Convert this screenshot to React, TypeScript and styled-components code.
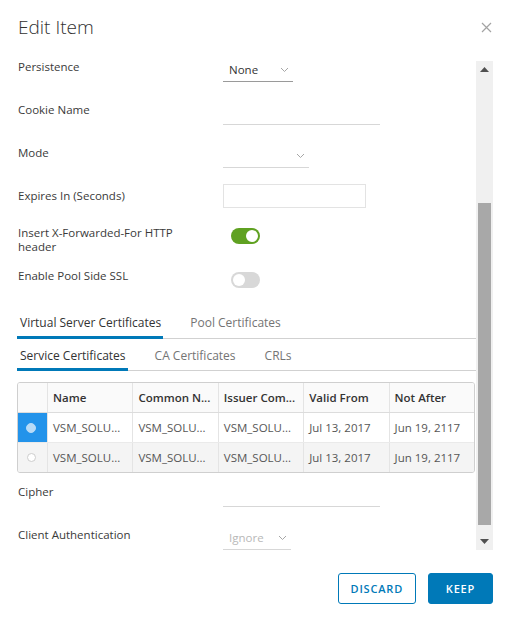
import styled, { createGlobalStyle } from "styled-components";

// Edit item modal with a form, cert tabs and a small table

const FONT = `"Open Sans", Lato, "Liberation Sans", sans-serif`;

const GlobalStyle = createGlobalStyle`
  html, body {
    margin: 0;
    padding: 0;
    background: #fff;
  }
  body {
    font-family: ${FONT};
    color: #333;
  }
`;

interface CertRow {
  name: string;
  common: string;
  issuer: string;
  validFrom: string;
  notAfter: string;
  selected: boolean;
}

const certs: CertRow[] = [
  {
    name: "VSM_SOLU...",
    common: "VSM_SOLU...",
    issuer: "VSM_SOLU...",
    validFrom: "Jul 13, 2017",
    notAfter: "Jun 19, 2117",
    selected: true,
  },
  {
    name: "VSM_SOLU...",
    common: "VSM_SOLU...",
    issuer: "VSM_SOLU...",
    validFrom: "Jul 13, 2017",
    notAfter: "Jun 19, 2117",
    selected: false,
  },
];

const Chevron = () => (
  <svg width="9" height="6" viewBox="0 0 9 6">
    <path d="M1 1 L4.5 4.5 L8 1" fill="none" stroke="#a6a6a6" strokeWidth="1" />
  </svg>
);

const App = () => {
  return (
    <>
      <GlobalStyle />
      <Modal>
        <Header>
          <Title>Edit Item</Title>
          <CloseButton aria-label="close">
            <svg width="11" height="11" viewBox="0 0 11 11">
              <path d="M1 1 L10 10 M10 1 L1 10" stroke="#a3a3a3" strokeWidth="1.2" />
            </svg>
          </CloseButton>
        </Header>

        <Body>
          <Content>
            <FormRow>
              <Label>Persistence</Label>
              <Select $width={70} $dark>
                <span>None</span>
                <Chevron />
              </Select>
            </FormRow>

            <FormRow $mt={21}>
              <Label>Cookie Name</Label>
              <LineInput $width={157} />
            </FormRow>

            <FormRow $mt={21}>
              <Label>Mode</Label>
              <Select $width={86}>
                <span />
                <Chevron />
              </Select>
            </FormRow>

            <FormRow $mt={16} $center>
              <Label>Expires In (Seconds)</Label>
              <BoxInput />
            </FormRow>

            <FormRow $mt={18}>
              <Label>
                Insert X-Forwarded-For HTTP
                <br />
                header
              </Label>
              <Toggle $on $offset={2} />
            </FormRow>

            <FormRow $mt={15}>
              <Label>Enable Pool Side SSL</Label>
              <Toggle $offset={3} />
            </FormRow>

            <TabBar $mt={17} $height={34}>
              <Tab $active>Virtual Server Certificates</Tab>
              <Tab>Pool Certificates</Tab>
            </TabBar>

            <TabBar $height={32}>
              <Tab $active>Service Certificates</Tab>
              <Tab>CA Certificates</Tab>
              <Tab>CRLs</Tab>
            </TabBar>

            <Table>
              <HeadRow>
                <Cell />
                <Cell>Name</Cell>
                <Cell>Common N...</Cell>
                <Cell>Issuer Com...</Cell>
                <Cell>Valid From</Cell>
                <Cell>Not After</Cell>
              </HeadRow>
              {certs.map((c, i) => (
                <DataRow key={i} $striped={i % 2 === 1}>
                  <RadioCell $selected={c.selected}>
                    <Radio $selected={c.selected} />
                  </RadioCell>
                  <Cell>{c.name}</Cell>
                  <Cell>{c.common}</Cell>
                  <Cell>{c.issuer}</Cell>
                  <Cell>{c.validFrom}</Cell>
                  <Cell>{c.notAfter}</Cell>
                </DataRow>
              ))}
            </Table>

            <FormRow $mt={12}>
              <Label>Cipher</Label>
              <LineInput $width={157} />
            </FormRow>

            <FormRow $mt={21}>
              <Label>Client Authentication</Label>
              <Select $width={68} $disabled>
                <span>Ignore</span>
                <Chevron />
              </Select>
            </FormRow>
          </Content>

          <Scrollbar>
            <ScrollArrow>
              <svg width="9" height="5" viewBox="0 0 9 5">
                <path d="M0 5 L4.5 0 L9 5 Z" fill="#505050" />
              </svg>
            </ScrollArrow>
            <ScrollTrack>
              <ScrollThumb />
            </ScrollTrack>
            <ScrollArrow>
              <svg width="9" height="5" viewBox="0 0 9 5">
                <path d="M0 0 L4.5 5 L9 0 Z" fill="#505050" />
              </svg>
            </ScrollArrow>
          </Scrollbar>
        </Body>

        <Footer>
          <Button>Discard</Button>
          <Button $primary>Keep</Button>
        </Footer>
      </Modal>
    </>
  );
};

// Styling
const Modal = styled.div`
  width: 511px;
  height: 625px;
  box-sizing: border-box;
  padding: 0 18px 0 17px;
  display: flex;
  flex-direction: column;
  background: #fff;
`;

const Header = styled.div`
  height: 60px;
  display: flex;
  justify-content: space-between;
  align-items: flex-start;
  flex-shrink: 0;
`;

const Title = styled.h3`
  margin: 14px 0 0 1px;
  font-size: 19px;
  line-height: 26px;
  font-weight: 300;
  color: #313131;
`;

const CloseButton = styled.button`
  margin-top: 22px;
  margin-right: 1px;
  padding: 0;
  border: none;
  background: none;
  line-height: 0;
  cursor: pointer;
`;

const Body = styled.div`
  height: 490px;
  display: flex;
  flex-shrink: 0;
`;

const Content = styled.div`
  flex: 1;
  overflow: hidden;
  display: flex;
  flex-direction: column;
`;

const FormRow = styled.div<{ $mt?: number; $center?: boolean }>`
  display: grid;
  grid-template-columns: 206px 1fr;
  align-items: ${(p) => (p.$center ? "center" : "start")};
  margin-top: ${(p) => p.$mt ?? 0}px;
  flex-shrink: 0;
`;

const Label = styled.label`
  padding-left: 1px;
  font-size: 11.5px;
  line-height: 14px;
  color: #3a3a3a;
`;

const Select = styled.div<{ $width: number; $dark?: boolean; $disabled?: boolean }>`
  width: ${(p) => p.$width}px;
  height: 22px;
  box-sizing: border-box;
  padding: 0 4px 2px 6px;
  display: flex;
  align-items: center;
  justify-content: space-between;
  border-bottom: 1px solid ${(p) => (p.$dark ? "#9a9a9a" : "#d7d7d7")};
  font-size: 11.5px;
  color: ${(p) => (p.$disabled ? "#b8b8b8" : "#333")};
`;

const LineInput = styled.div<{ $width: number }>`
  width: ${(p) => p.$width}px;
  height: 22px;
  box-sizing: border-box;
  border-bottom: 1px solid #d7d7d7;
`;

const BoxInput = styled.div`
  width: 143px;
  height: 24px;
  box-sizing: border-box;
  border: 1px solid #e3e3e3;
`;

const Toggle = styled.div<{ $on?: boolean; $offset: number }>`
  position: relative;
  width: 29px;
  height: 16px;
  margin: ${(p) => p.$offset}px 0 0 8px;
  border-radius: 8px;
  background: ${(p) => (p.$on ? "#5fa121" : "#d8d8d8")};

  &::after {
    content: "";
    position: absolute;
    top: 2px;
    left: ${(p) => (p.$on ? "15px" : "2px")};
    width: 12px;
    height: 12px;
    border-radius: 50%;
    background: #fff;
  }
`;

const TabBar = styled.div<{ $mt?: number; $height: number }>`
  display: flex;
  gap: 24px;
  height: ${(p) => p.$height}px;
  box-sizing: border-box;
  margin-top: ${(p) => p.$mt ?? 0}px;
  border-bottom: 1px solid #d1d1d1;
  flex-shrink: 0;
`;

const Tab = styled.div<{ $active?: boolean }>`
  padding: 0 2px 0 3px;
  display: flex;
  align-items: center;
  font-size: 12px;
  color: ${(p) => (p.$active ? "#333" : "#747474")};
  box-shadow: ${(p) => (p.$active ? "inset 0 -3px 0 #0079b8" : "none")};
  margin-bottom: -1px;
`;

const Table = styled.div`
  margin-top: 11px;
  width: 458px;
  box-sizing: border-box;
  border: 1px solid #cfcfcf;
  border-radius: 3px;
  overflow: hidden;
  flex-shrink: 0;
`;

const HeadRow = styled.div`
  display: grid;
  grid-template-columns: 29px repeat(5, 1fr);
  height: 29px;
  background: #fafafa;
  font-weight: 600;
  color: #333;
  border-bottom: 1px solid #dcdcdc;
`;

const DataRow = styled.div<{ $striped: boolean }>`
  display: grid;
  grid-template-columns: 29px repeat(5, 1fr);
  height: 29px;
  background: ${(p) => (p.$striped ? "#f4f4f4" : "#fff")};
  color: #565656;
  & + & {
    border-top: 1px solid #eaeaea;
  }
`;

const Cell = styled.div`
  display: flex;
  align-items: center;
  padding-left: 5px;
  font-size: 11.5px;
  white-space: nowrap;
  overflow: hidden;
  border-left: 1px solid #e4e4e4;
  &:first-child {
    border-left: none;
  }
`;

const RadioCell = styled.div<{ $selected: boolean }>`
  display: flex;
  align-items: center;
  justify-content: center;
  padding-right: 3px;
  background: ${(p) => (p.$selected ? "#2393ea" : "transparent")};
`;

const Radio = styled.span<{ $selected: boolean }>`
  width: ${(p) => (p.$selected ? 10 : 9)}px;
  height: ${(p) => (p.$selected ? 10 : 9)}px;
  box-sizing: border-box;
  border-radius: 50%;
  background: ${(p) => (p.$selected ? "#b8dbf7" : "#fff")};
  border: 1px solid ${(p) => (p.$selected ? "#b8dbf7" : "#cdcdcd")};
`;

const Scrollbar = styled.div`
  width: 17px;
  margin-top: 1px;
  display: flex;
  flex-direction: column;
  background: #f0f0f0;
`;

const ScrollArrow = styled.div`
  height: 17px;
  display: flex;
  align-items: center;
  justify-content: center;
  flex-shrink: 0;
`;

const ScrollTrack = styled.div`
  flex: 1;
  padding: 125px 2px 8px 2px;
  display: flex;
`;

const ScrollThumb = styled.div`
  flex: 1;
  background: #a8a8a8;
`;

const Footer = styled.div`
  display: flex;
  justify-content: flex-end;
  gap: 12px;
  padding-top: 23px;
`;

const Button = styled.button<{ $primary?: boolean }>`
  height: 31px;
  padding: 0 12px;
  min-width: 65px;
  box-sizing: border-box;
  border-radius: 3px;
  border: 1px solid #0079b8;
  background: ${(p) => (p.$primary ? "#0079b8" : "#fff")};
  color: ${(p) => (p.$primary ? "#fff" : "#0079b8")};
  font-family: ${FONT};
  font-size: 11px;
  font-weight: 600;
  letter-spacing: 0.8px;
  text-transform: uppercase;
  cursor: pointer;
`;

export default App;
